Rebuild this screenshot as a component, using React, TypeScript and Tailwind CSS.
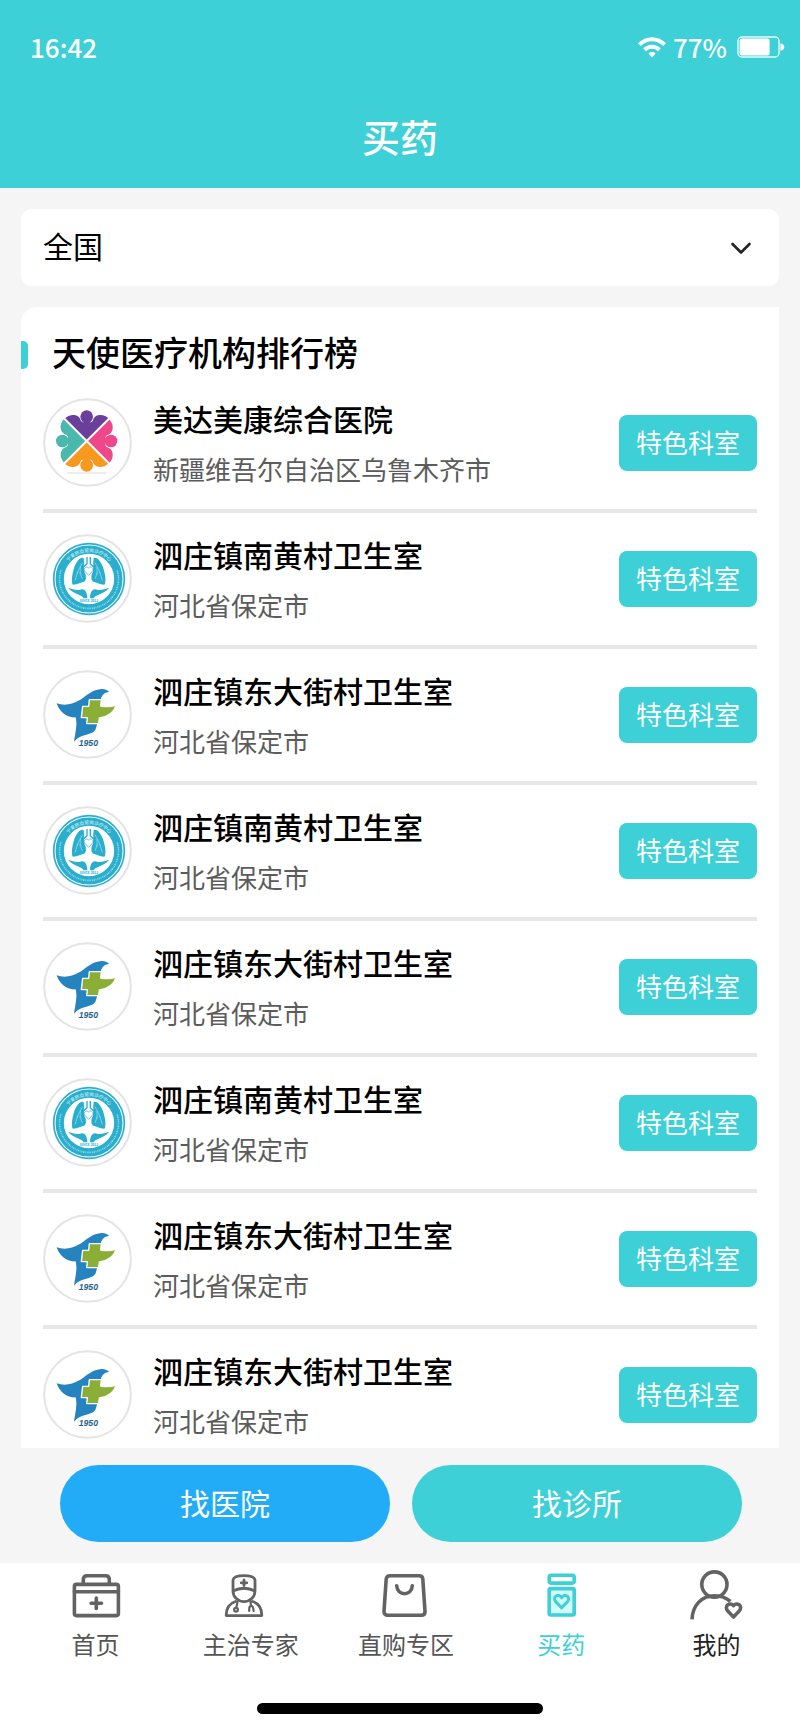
import { useId, type ReactNode } from "react";

type LogoKind = "people" | "lungs" | "bird";

type Clinic = { name: string; region: string; logo: LogoKind };

const NANHUANG: Clinic = { name: "泗庄镇南黄村卫生室", region: "河北省保定市", logo: "lungs" };
const DONGDAJIE: Clinic = { name: "泗庄镇东大街村卫生室", region: "河北省保定市", logo: "bird" };

const clinics: Clinic[] = [
  { name: "美达美康综合医院", region: "新疆维吾尔自治区乌鲁木齐市", logo: "people" },
  NANHUANG,
  DONGDAJIE,
  NANHUANG,
  DONGDAJIE,
  NANHUANG,
  DONGDAJIE,
  DONGDAJIE,
];

const PERSON =
  "M140 150 L73 84 Q87 70 103 72 Q118 74 123 90 Q128 96 133 93 L148 93 Q154 96 158 90 Q162 74 178 72 Q194 70 208 84 Z";

function PeopleLogo() {
  const colors = ["#6a3f9c", "#ee478a", "#f8991f", "#4bb8ad"];
  return (
    <svg viewBox="9 21 267 267" className="size-[89px] shrink-0" aria-hidden="true">
      <circle cx="142.5" cy="154.5" r="130" fill="#fff" stroke="#e4e4e4" strokeWidth="6" />
      {colors.map((color, i) => (
        <g key={color} transform={`rotate(${i * 90} 140 150)`}>
          <path d={PERSON} fill={color} />
          <circle cx="140" cy="77" r="19" fill={color} />
        </g>
      ))}
      <path d="M68 78 L212 222 M212 78 L68 222" stroke="#fff" strokeWidth="6" />
      <path d="M84 246 H198" stroke="#ececec" strokeWidth="6" strokeLinecap="round" />
    </svg>
  );
}

function LungsLogo() {
  const id = useId();
  const blue = "#29afcd";
  return (
    <svg viewBox="9 15 267 267" className="size-[89px] shrink-0" aria-hidden="true">
      <defs>
        <path id={id} d="M66 150 A81 81 0 0 1 228 150" />
      </defs>
      <circle cx="142.5" cy="148.5" r="130" fill="#fff" stroke="#e4e4e4" strokeWidth="6" />
      <circle cx="147" cy="150" r="106" fill="none" stroke={blue} strokeWidth="5" />
      <circle cx="147" cy="150" r="88" fill="none" stroke={blue} strokeWidth="25" />
      <text fontSize="14" fill="#d9f3f8" textAnchor="middle">
        <textPath href={`#${id}`} startOffset="50%">
          宁夏肺血管病诊疗中心
        </textPath>
      </text>
      <path
        d="M63 122 A88.5 88.5 0 1 0 231 122"
        fill="none"
        stroke="#8fd6e5"
        strokeWidth="5"
        strokeDasharray="3 2 4 2 2 3"
      />
      <path
        d="M131 87 C119 84 108 99 101 121 C96 139 94 154 97 166 C106 170 120 160 132 158 C139 154 139 143 136 134 C130 126 134 104 131 87 Z"
        fill={blue}
      />
      <path
        d="M161 87 C173 84 184 99 191 121 C196 139 198 154 195 166 C186 170 172 160 160 158 C153 154 153 143 156 134 C162 126 158 104 161 87 Z"
        fill={blue}
      />
      <path d="M141 84 V104 L132 113 M151 84 V104 L160 113" stroke={blue} strokeWidth="4" fill="none" />
      <path d="M146 139 L134 126 C129 117 140 110 146 117 C152 110 163 117 158 126 Z" fill="#fff" stroke={blue} strokeWidth="2" />
      <path
        d="M127 101 L111 132 M121 114 L120 136 M113 129 L105 154 M121 131 L126 149 M165 101 L181 132 M171 114 L172 136 M179 129 L187 154 M171 131 L166 149"
        stroke="#a8e0ec"
        strokeWidth="2"
        fill="none"
      />
      <path d="M84 176 C96 179 108 185 121 182 C132 177 142 187 142 208 L131 208 C126 196 104 198 84 176 Z" fill={blue} />
      <path d="M208 176 C196 179 184 185 171 182 C160 177 150 187 150 208 L161 208 C166 196 188 198 208 176 Z" fill={blue} />
      <text x="147" y="220" fontSize="10" fontWeight="700" fill={blue} textAnchor="middle">
        SINCE 2011
      </text>
    </svg>
  );
}

function BirdLogo() {
  return (
    <svg viewBox="9 17 267 267" className="size-[89px] shrink-0" aria-hidden="true">
      <circle cx="142.5" cy="150.5" r="130" fill="#fff" stroke="#e4e4e4" strokeWidth="6" />
      <path
        d="M50 117 C74 125 96 120 118 108 C136 97 150 81 172 76 C186 72 199 73 208 83 C194 83 185 93 182 106 L176 130 L172 176 C168 190 168 198 159 204 C140 214 116 213 102 233 C105 208 113 182 107 159 C82 162 58 143 50 117 Z"
        fill="#2583bf"
      />
      <path
        d="M148 106 H184 L182 125 C197 128 212 128 229 122 C221 146 203 158 178 161 L176 178 H140 L142 160 H124 L128 126 H146 Z"
        fill="#8aae36"
        stroke="#fff"
        strokeWidth="4"
        strokeLinejoin="round"
      />
      <text
        x="145"
        y="245"
        fontSize="26"
        fontWeight="700"
        fontStyle="italic"
        fill="#22638c"
        textAnchor="middle"
        className="font-['Liberation_Sans',sans-serif]"
      >
        1950
      </text>
    </svg>
  );
}

function Logo({ kind }: { kind: LogoKind }) {
  if (kind === "people") return <PeopleLogo />;
  if (kind === "lungs") return <LungsLogo />;
  return <BirdLogo />;
}

function NavIcon({ children }: { children: ReactNode }) {
  return (
    <svg
      viewBox="0 0 56 56"
      className="size-14"
      fill="none"
      stroke="currentColor"
      strokeWidth="3.6"
      strokeLinecap="round"
      strokeLinejoin="round"
      aria-hidden="true"
    >
      {children}
    </svg>
  );
}

const tabs: { label: string; tone: string; text: string; current?: boolean; icon: ReactNode }[] = [
  {
    label: "首页",
    tone: "text-[#636363]",
    text: "text-[#555]",
    icon: (
      <NavIcon>
        <rect x="6.4" y="16.4" width="44" height="31.2" rx="2" />
        <path d="M6.4 23.7 H50.4 M15.3 16 V11.5 Q15.3 7.7 19 7.7 H37.6 Q41.3 7.7 41.3 11.5 V16 M28.3 30 V40.4 M23.1 35.2 H33.5" />
      </NavIcon>
    ),
  },
  {
    label: "主治专家",
    tone: "text-[#636363]",
    text: "text-[#555]",
    icon: (
      <NavIcon>
        <g strokeWidth="2.8">
          <path d="M10 23 V12 Q11 7.6 21 7.6 Q31 7.6 32 12 V23 C32 29 27 33.6 21 33.6 C15 33.6 10 29 10 23 Q21 17.5 32 23" />
          <path d="M12.5 33.5 C6 35.5 3.2 41 3.2 47.6 H38.8 C38.8 41 36 35.5 29.5 33.5" />
          <path d="M21 12 V17.6 M18.2 14.8 H23.8" />
        </g>
        <g strokeWidth="2.2">
          <path d="M14.6 33.5 L13.4 39.4 M27.4 33.5 L28 37.6 M26.2 43 V40.5 Q26.4 37.8 28.4 37.8 Q30.2 37.8 30.6 43" />
          <circle cx="13" cy="41.8" r="1.9" />
        </g>
      </NavIcon>
    ),
  },
  {
    label: "直购专区",
    tone: "text-[#636363]",
    text: "text-[#555]",
    icon: (
      <NavIcon>
        <path d="M12 7.7 H41.2 Q44.6 7.7 44.8 11 L47 43.4 Q47 47.3 43.4 47.3 H9.8 Q6 47.3 6 43.4 L8.2 11 Q8.6 7.7 12 7.7 Z" />
        <path d="M18.7 17.7 C19.4 28.4 33.6 28.4 34.3 17.7" />
      </NavIcon>
    ),
  },
  {
    label: "买药",
    tone: "text-[#3dd0d6]",
    text: "text-[#3dd0d6]",
    current: true,
    icon: (
      <NavIcon>
        <rect x="16.2" y="7.3" width="25" height="7.8" rx="2" />
        <rect x="16.2" y="20.6" width="25" height="26.4" rx="1.5" fill="#d2fbfc" />
        <path strokeWidth="3" d="M28.6 39.8 L22.6 33.6 C19 29 25.4 24.6 28.6 29.8 C31.8 24.6 38.2 29 34.6 33.6 Z" />
      </NavIcon>
    ),
  },
  {
    label: "我的",
    tone: "text-[#636363]",
    text: "text-[#222]",
    icon: (
      <NavIcon>
        <circle cx="26.4" cy="16.5" r="12.6" />
        <path strokeLinecap="butt" d="M4 51.4 C4.5 37.5 13.5 27.8 26.4 27.8 C32.6 27.8 38 29.6 42.4 33.4" />
        <path d="M45.5 49 L39.8 43 C35.4 37.4 42.4 34 45.5 37.6 C48.6 34 55.6 37.4 51.2 43 Z" />
      </NavIcon>
    ),
  },
];

function StatusBar() {
  return (
    <div className="flex h-[93px] items-center justify-between pr-[15px] pl-[30px] text-[26px] font-medium">
      <span>16:42</span>
      <div className="flex items-center">
        <svg viewBox="0 0 30 22" className="mr-1.5 h-[22px] w-[30px]" fill="currentColor" aria-hidden="true">
          <path d="M1 7.2 C8.5 -0.9 21.5 -0.9 29 7.2 L26.2 10 C20.2 3.7 9.8 3.7 3.8 10 Z" />
          <path d="M6.2 12.4 C11 7.4 19 7.4 23.8 12.4 L21 15.2 C17.8 11.9 12.2 11.9 9 15.2 Z" />
          <path d="M11.4 17.5 C13.4 15.6 16.6 15.6 18.6 17.5 L15 21.4 Z" />
        </svg>
        <span>77%</span>
        <svg viewBox="0 0 48 22" className="ml-2.5 h-[22px] w-12" aria-hidden="true">
          <rect x="1" y="1" width="41" height="20" rx="4" fill="none" stroke="#e4fbfc" strokeWidth="1.4" />
          <rect x="2.6" y="2.6" width="30" height="16.8" rx="2" fill="#fff" />
          <path d="M43.4 7.2 C48.6 8 48.6 14 43.4 14.8 Z" fill="#fff" />
        </svg>
      </div>
    </div>
  );
}

export default function App() {
  return (
    <div className="flex h-screen flex-col bg-[#f5f5f5] font-['Noto_Sans_CJK_SC',sans-serif] text-black">
      <header className="shrink-0 bg-[#3dd0d6] text-white">
        <StatusBar />
        <h1 className="pt-[19px] pb-7 text-center text-[38px] leading-[48px] font-medium">买药</h1>
      </header>

      <div className="relative mx-[21px] mt-[21px] shrink-0">
        <select
          aria-label="地区"
          className="block h-[77px] w-full appearance-none rounded-[10px] bg-white px-[22px] pb-1 text-[30px]"
        >
          <option>全国</option>
        </select>
        <svg
          viewBox="0 0 24 24"
          className="pointer-events-none absolute top-1/2 right-[26px] size-6 -translate-y-1/2"
          fill="none"
          stroke="#222"
          strokeWidth="2.6"
          strokeLinecap="round"
          strokeLinejoin="round"
          aria-hidden="true"
        >
          <path d="M3.5 8 L12 16.5 L20.5 8" />
        </svg>
      </div>

      <main className="mx-[21px] mt-[21px] min-h-0 flex-1 overflow-hidden rounded-tl-2xl bg-white">
        <div className="mb-0.5 flex items-end pt-[22px]">
          <span className="mb-1.5 h-7 w-[7px] rounded-r-[5px] bg-[#3dd0d6]" />
          <h2 className="ml-6 text-[34px] leading-[46px] font-medium">天使医疗机构排行榜</h2>
        </div>
        <ul className="px-[22px]">
          {clinics.map((clinic, i) => (
            <li key={i} className="flex items-center border-b-4 border-[#e7e7e7] pt-[21px] pb-[22px]">
              <Logo kind={clinic.logo} />
              <div className="ml-[21px] min-w-0 flex-1">
                <h3 className="text-[30px] leading-10 font-medium">{clinic.name}</h3>
                <p className="mt-[13px] text-[26px] leading-9 text-[#5c5c5c]">{clinic.region}</p>
              </div>
              <button
                type="button"
                className="h-14 shrink-0 rounded-lg bg-[#3dd0d6] px-[17px] pb-0.5 text-[26px] text-white"
              >
                特色科室
              </button>
            </li>
          ))}
        </ul>
      </main>

      <div className="flex shrink-0 gap-[22px] pt-[17px] pr-[58px] pb-[21px] pl-[60px] text-[30px] text-white">
        <button type="button" className="h-[77px] flex-1 rounded-full bg-[#22acf8] pb-0.5">
          找医院
        </button>
        <button type="button" className="h-[77px] flex-1 rounded-full bg-[#3dd0d6] pb-0.5">
          找诊所
        </button>
      </div>

      <footer className="shrink-0 bg-white pb-[18px]">
        <nav className="flex pt-[5px] pr-1.5 pl-[18px]">
          {tabs.map((tab) => (
            <a
              key={tab.label}
              href="#"
              aria-current={tab.current ? "page" : undefined}
              className="flex flex-1 flex-col items-center gap-1"
            >
              <span className={tab.tone}>{tab.icon}</span>
              <span className={`text-2xl leading-8 ${tab.text}`}>{tab.label}</span>
            </a>
          ))}
        </nav>
        <div className="mx-auto mt-[43px] h-[11px] w-[286px] rounded-full bg-black" />
      </footer>
    </div>
  );
}
